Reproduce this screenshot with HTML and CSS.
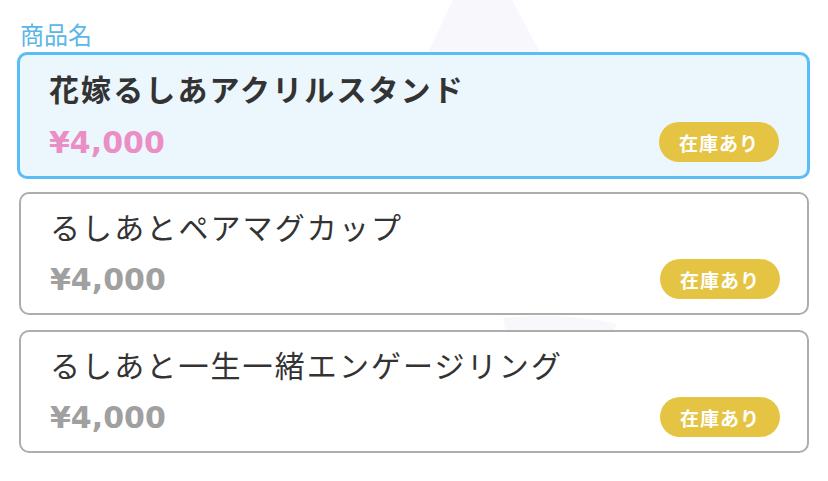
FILE: index.html
```html
<!DOCTYPE html>
<html lang="ja">

<head>
  <meta charset="utf-8">
  <title>商品一覧</title>
  <link rel="stylesheet" href="styles.css">
</head>

<body>
  <div class="page">
    <svg class="bg-deco" width="828" height="481" viewBox="0 0 828 481">
      <path d="M453 0 L512 0 L560 90 L470 90 L410 90 Z" fill="#f7f7fc"/>
      <path d="M503 318 Q560 312 617 324 L612 332 L506 332 Z" fill="#f7f7fc"/>
    </svg>

    <p class="label">商品名</p>

    <div class="list">
      <div class="card card-selected">
        <p class="card-title">花嫁るしあアクリルスタンド</p>
        <div class="card-row">
          <span class="price">¥4,000</span>
          <span class="stock">在庫あり</span>
        </div>
      </div>

      <div class="card">
        <p class="card-title">るしあとペアマグカップ</p>
        <div class="card-row">
          <span class="price">¥4,000</span>
          <span class="stock">在庫あり</span>
        </div>
      </div>

      <div class="card">
        <p class="card-title">るしあと一生一緒エンゲージリング</p>
        <div class="card-row">
          <span class="price">¥4,000</span>
          <span class="stock">在庫あり</span>
        </div>
      </div>
    </div>
  </div>
</body>

</html>
```

FILE: styles.css
```css
body{
    margin: 0;
    background-color: white;
    font-family: "Noto Sans CJK JP", "Noto Sans", sans-serif;
    color: #333333;
}

.page{
    position: relative;
    width: 828px;
    height: 481px;
    overflow: hidden;
}

.bg-deco{
    position: absolute;
    left: 0;
    top: 0;
}

.label{
    position: relative;
    margin: 0;
    padding: 19px 0 0 20px;
    height: 33px;
    font-size: 24px;
    line-height: 30px;
    color: #5cb6e6;
}

.list{
    position: relative;
    display: flex;
    flex-direction: column;
    padding: 0 19px;
}

.card{
    box-sizing: border-box;
    height: 123px;
    margin-bottom: 15px;
    padding: 12px 27px 14px 29px;
    border: 2px solid #adadad;
    border-radius: 10px;
    background-color: white;
    display: flex;
    flex-direction: column;
}

.card-selected{
    height: 127px;
    margin: 0 -1px 13px -2px;
    padding: 13px 28px 14px 29px;
    border: 3px solid #5bbdf6;
    background-color: #ebf6fd;
}

.card-title{
    margin: 0;
    font-size: 30px;
    line-height: 40px;
    letter-spacing: 2.1px;
    white-space: nowrap;
}

.card-selected .card-title{
    font-weight: bold;
}

.card-row{
    margin-top: auto;
    height: 40px;
    display: flex;
    justify-content: space-between;
    align-items: center;
}

.price{
    font-family: "DejaVu Sans", "Noto Sans", sans-serif;
    font-size: 30px;
    font-weight: bold;
    color: #a0a0a0;
}

.card-selected .price{
    color: #ec8ec6;
}

.stock{
    width: 120px;
    height: 40px;
    border-radius: 20px;
    background-color: #e6c443;
    color: white;
    font-size: 19px;
    font-weight: bold;
    letter-spacing: 1px;
    display: flex;
    justify-content: center;
    align-items: center;
}
```
